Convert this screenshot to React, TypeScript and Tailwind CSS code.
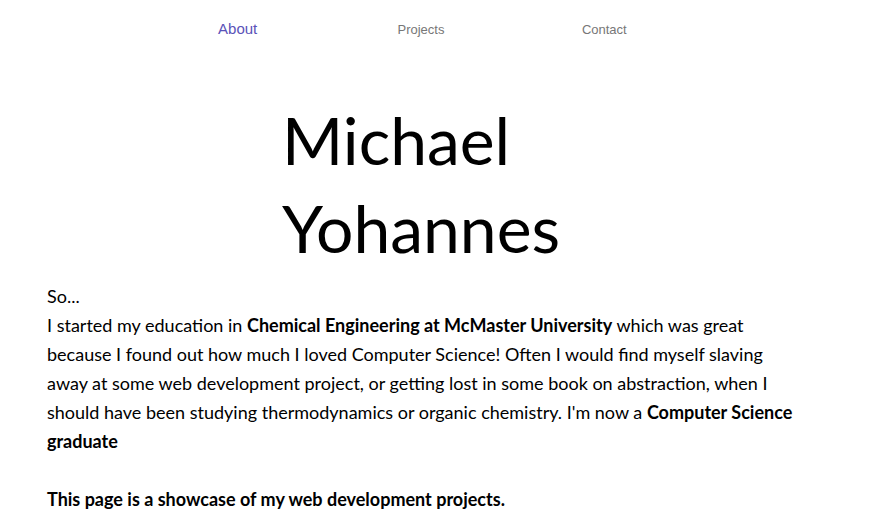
export default function App() {
  return (
    <div className="min-h-screen bg-white text-black">
      <nav className="ml-[146px] w-[550px] grid grid-cols-3 text-center pt-[19px] font-['Liberation_Sans',Arial,sans-serif]">
        <a className="text-[15px] text-[#5a52b8] leading-[20px]">About</a>
        <a className="text-[13px] text-[#777777] leading-[20px] pt-[1px]">Projects</a>
        <a className="text-[13px] text-[#777777] leading-[20px] pt-[1px]">Contact</a>
      </nav>
      <main className="font-['Lato','Noto_Sans',sans-serif]">
        <h1 className="ml-[282px] w-[320px] mt-[56px] text-[66px] leading-[88px] font-normal">
          Michael Yohannes
        </h1>
        <div className="ml-[47px] mt-[10px] w-[780px] text-[18px] leading-[29px]">
          <p>So...</p>
          <p>
            I started my education in <b>Chemical Engineering at McMaster University</b> which was great
            <br />
            because I found out how much I loved Computer Science! Often I would find myself slaving
            <br />
            away at some web development project, or getting lost in some book on abstraction, when I
            <br />
            should have been studying thermodynamics or organic chemistry. I'm now a <b>Computer Science</b>
            <br />
            <b>graduate</b>
          </p>
          <p className="mt-[29px] font-bold">This page is a showcase of my web development projects.</p>
        </div>
      </main>
    </div>
  );
}
